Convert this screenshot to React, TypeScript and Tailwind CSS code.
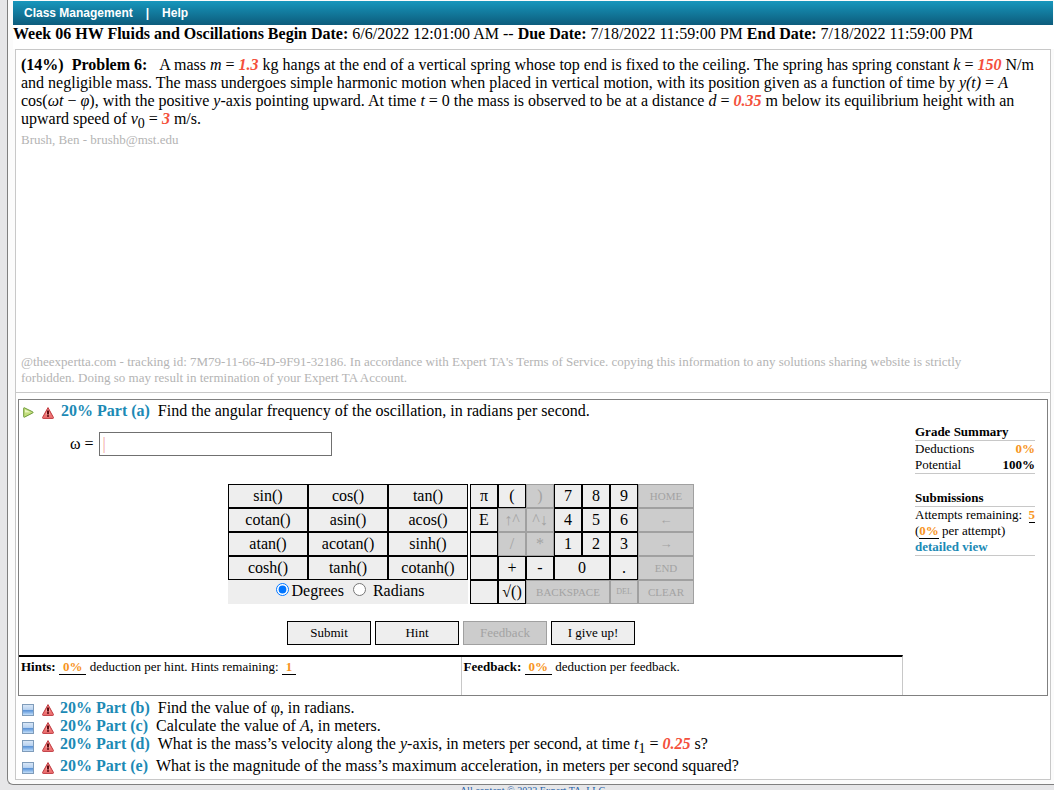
import { useRef, useState, type ReactNode } from "react";

function Warning() {
  return (
    <svg width="12" height="12" viewBox="0 0 12 12" className="shrink-0" aria-hidden="true">
      <path d="M6 .6 11.5 10.6Q11.6 11.4 10.9 11.4H1.1Q.4 11.4.5 10.6Z" fill="#ee7474" stroke="#bf3a40" strokeWidth="1" />
      <path d="M6 2.6 8.4 7.4H3.6Z" fill="#f8b4ac" />
      <path d="M5 3.5h2v4H5zM5 8.3h2v1.5H5z" fill="#5a0a10" />
    </svg>
  );
}

function Play() {
  return (
    <svg width="11" height="11" viewBox="0 0 11 11" className="shrink-0" aria-hidden="true">
      <path d="M.7 1.2Q.7.5 1.4.8L9.8 4.9Q10.4 5.4 9.8 5.9L1.4 10.2Q.7 10.4.7 9.7Z" fill="#c3de7c" stroke="#6f9b3c" />
      <path d="M2 2.4 7.6 5.2 2 5.6Z" fill="#e9f5bf" />
    </svg>
  );
}

function Square() {
  return (
    <svg width="12" height="12" viewBox="0 0 12 12" className="shrink-0" aria-hidden="true">
      <defs>
        <linearGradient id="sq" x1="0" y1="0" x2="0" y2="1">
          <stop offset="0" stopColor="#dbe8f7" />
          <stop offset=".45" stopColor="#b9d3f0" />
          <stop offset=".55" stopColor="#5b93d6" />
          <stop offset=".75" stopColor="#8db9ea" />
          <stop offset="1" stopColor="#d3e8fb" />
        </linearGradient>
      </defs>
      <rect x=".5" y=".5" width="11" height="11" fill="url(#sq)" stroke="#7f9cba" />
    </svg>
  );
}

const V = ({ children }: { children: ReactNode }) => (
  <b className="italic text-[#f4503c]">{children}</b>
);
const Amber = ({ children }: { children: ReactNode }) => (
  <b className="text-[#f7941d]">{children}</b>
);
const Blank = ({ children }: { children: ReactNode }) => (
  <b className="inline-block border-b border-black px-1 leading-[15px] text-[#f7941d]">{children}</b>
);
const Sub = ({ children }: { children: ReactNode }) => (
  <sub className="text-sm leading-none">{children}</sub>
);

function Part({ id, pct = "20%", className = "", children }: { id: string; pct?: string; className?: string; children: ReactNode }) {
  return (
    <div className={`flex items-center ${className}`}>
      <div className="flex w-[38px] shrink-0 items-center gap-2 pt-[3px]">
        {id === "a" ? <Play /> : <Square />}
        <Warning />
      </div>
      <p>
        <b className="mr-2 text-[#1c8ab5]">{pct} Part ({id})</b>
        {children}
      </p>
    </div>
  );
}

const FUNCS = ["sin()", "cos()", "tan()", "cotan()", "asin()", "acos()", "atan()", "acotan()", "sinh()", "cosh()", "tanh()", "cotanh()"];

type Key = { t: string; off?: boolean; span?: boolean; size?: string; name?: string };
const KEYS: Key[] = [
  { t: "π" }, { t: "(" }, { t: ")", off: true }, { t: "7" }, { t: "8" }, { t: "9" }, { t: "HOME", off: true, size: "text-[11px]" },
  { t: "E" }, { t: "↑^", off: true }, { t: "^↓", off: true }, { t: "4" }, { t: "5" }, { t: "6" }, { t: "←", off: true, size: "text-[13px]" },
  { t: "", name: "blank 1" }, { t: "/", off: true }, { t: "*", off: true }, { t: "1" }, { t: "2" }, { t: "3" }, { t: "→", off: true, size: "text-[13px]" },
  { t: "", name: "blank 2" }, { t: "+" }, { t: "-" }, { t: "0", span: true }, { t: "." }, { t: "END", off: true, size: "text-[11px]" },
  { t: "", name: "blank 3" }, { t: "√()" },
];

const ON = "border-black bg-[#eeeeee] text-black";
const OFF = "border-[#a0a0a0] bg-[#cccccc] text-[#a3a3a3]";

export default function App() {
  const [answer, setAnswer] = useState("");
  const [unit, setUnit] = useState("deg");
  const field = useRef<HTMLInputElement>(null);
  const type = (t: string) => {
    setAnswer((a) => a + t);
    field.current?.focus();
  };

  return (
    <div className="bg-[#e6e6e8] pl-[7px] font-['Liberation_Serif',serif] text-base leading-[18px] text-black">
      <div className="rounded-bl-md border-b border-l border-[#808080] bg-[#fbfbfb] pt-px pb-1 pl-[5px]">
        <nav className="mr-px flex h-6 items-center gap-[13px] bg-linear-to-b from-[#1797bd] to-[#0d5c7c] pl-[11px] font-['Liberation_Sans',sans-serif] text-[12px] font-bold text-white">
          <a href="#class">Class Management</a>
          <span>|</span>
          <a href="#help">Help</a>
        </nav>
        <h1 className="h-6 bg-white">
          <b>Week 06 HW Fluids and Oscillations Begin Date:</b> 6/6/2022 12:01:00 AM -- <b>Due Date:</b> 7/18/2022 11:59:00 PM{" "}
          <b>End Date:</b> 7/18/2022 11:59:00 PM
        </h1>

        <main className="mr-[3px] ml-[2px] border border-[#c8c8c8] bg-white">
          <section className="flex h-[343px] flex-col justify-between border-b border-[#c8c8c8] px-[5px] pt-[6px] pb-[6px]">
            <div>
              <p>
                <b className="mr-3">(14%)&nbsp; Problem 6:</b>A mass <i>m</i> = <V>1.3</V> kg hangs at the end of a vertical spring whose top end is fixed to the
                ceiling. The spring has spring constant <i>k</i> = <V>150</V> N/m and negligible mass. The mass undergoes simple harmonic motion when placed in
                vertical motion, with its position given as a function of time by <i>y(t)</i> = <i>A</i> cos(<i>ωt</i> − <i>φ</i>), with the positive{" "}
                <i>y</i>-axis pointing upward. At time <i>t</i> = 0 the mass is observed to be at a distance <i>d</i> = <V>0.35</V> m below its equilibrium height
                with an upward speed of <i>v</i><Sub>0</Sub> = <V>3</V> m/s.
              </p>
              <p className="mt-1 text-[13px] leading-4 text-[#b4b4b4]">Brush, Ben - brushb@mst.edu</p>
            </div>
            <p className="pr-8 text-[13px] leading-4 text-[#b4b4b4]">
              @theexpertta.com - tracking id: 7M79-11-66-4D-9F91-32186. In accordance with Expert TA's Terms of Service. copying this information to any solutions
              sharing website is strictly forbidden. Doing so may result in termination of your Expert TA Account.
            </p>
          </section>

          <div className="px-[2px] pt-[6px] pb-1">
            <section className="border border-[#808080]">
              <div className="flex">
                <div className="min-w-0 flex-1">
                  <Part id="a" className="pt-[2px] pl-1">Find the angular frequency of the oscillation, in radians per second.</Part>
                  <div className="mt-3 flex items-center pl-[51px]">
                    <label htmlFor="ans">ω =</label>
                    <input id="ans" ref={field} value={answer} onChange={(e) => setAnswer(e.target.value)} placeholder="|"
                      className="ml-[5px] h-6 w-[233px] border border-[#707070] bg-white px-[3px] text-base outline-none placeholder:text-[#f2a097]" />
                  </div>

                  <div className="mt-7 ml-[209px] flex gap-[2px]">
                    <div className="w-[240px]">
                      <div className="grid grid-cols-3">
                        {FUNCS.map((f) => (
                          <button key={f} type="button" onClick={() => type(f)} className={`h-6 border ${ON}`}>{f}</button>
                        ))}
                      </div>
                      <fieldset className="flex h-6 items-start justify-center bg-[#eeeeee] pt-[2px] pl-1">
                        <label className="flex items-center">
                          <input type="radio" name="unit" checked={unit === "deg"} onChange={() => setUnit("deg")} className="mr-[3px] mb-1 size-[13px]" />
                          Degrees
                        </label>
                        <label className="ml-[9px] flex items-center">
                          <input type="radio" name="unit" checked={unit === "rad"} onChange={() => setUnit("rad")} className="mr-[7px] mb-1 size-[13px]" />
                          Radians
                        </label>
                      </fieldset>
                    </div>
                    <div className="grid grid-cols-[repeat(6,28px)_56px]">
                      {KEYS.map((k) => (
                        <button key={k.name ?? k.t} type="button" aria-label={k.t || k.name} disabled={k.off} onClick={() => type(k.t)}
                          className={`h-6 overflow-hidden border leading-[18px] ${k.size ?? ""} ${k.off ? OFF : ON} ${k.span ? "col-span-2" : ""}`}>
                          {k.t}
                        </button>
                      ))}
                      <button type="button" disabled className={`col-span-3 h-6 border text-[11px] ${OFF}`}>BACKSPACE</button>
                      <button type="button" disabled className={`h-6 border text-[8px] ${OFF}`}>DEL</button>
                      <button type="button" disabled className={`h-6 border text-[11px] ${OFF}`}>CLEAR</button>
                    </div>
                  </div>

                  <div className="mt-[17px] ml-[268px] flex gap-1 text-[13px]">
                    <button type="button" className={`h-6 w-[84px] border ${ON}`}>Submit</button>
                    <button type="button" className={`h-6 w-[84px] border ${ON}`}>Hint</button>
                    <button type="button" disabled className={`h-6 w-[84px] border ${OFF}`}>Feedback</button>
                    <button type="button" className={`h-6 w-[84px] border ${ON}`}>I give up!</button>
                  </div>
                </div>

                <aside className="mt-6 mr-3 w-[120px] shrink-0 text-[13px] leading-4">
                  <h2 className="border-b border-[#c8c8c8] font-bold">Grade Summary</h2>
                  <dl className="grid grid-cols-2 border-b border-[#c8c8c8]">
                    <dt>Deductions</dt>
                    <dd className="text-right"><Amber>0%</Amber></dd>
                    <dt>Potential</dt>
                    <dd className="text-right font-bold">100%</dd>
                  </dl>
                  <h2 className="mt-4 border-b border-[#c8c8c8] font-bold">Submissions</h2>
                  <div className="border-b border-[#c8c8c8]">
                    <p className="flex justify-between whitespace-nowrap">Attempts remaining: <b className="border-b border-black leading-[15px] text-[#f7941d]">5</b></p>
                    <p>(<b className="inline-block border-b border-black leading-[15px] text-[#f7941d]">0%</b> per attempt)</p>
                    <a href="#detail" className="block font-bold text-[#1c8ab5]">detailed view</a>
                  </div>
                </aside>
              </div>

              <div className="mt-[10px] mr-36 grid h-10 grid-cols-2 border-t-2 border-r border-t-black border-r-[#c8c8c8] text-[13px] leading-4">
                <p className="pt-[2px] pl-[2px]"><b>Hints:</b> <Blank>0%</Blank> deduction per hint. Hints remaining: <Blank>1</Blank></p>
                <p className="border-l border-[#c8c8c8] pt-[2px] pl-[2px]"><b>Feedback:</b> <Blank>0%</Blank> deduction per feedback.</p>
              </div>
            </section>

            <div className="pt-[3px] pl-1">
              <Part id="b">Find the value of φ, in radians.</Part>
              <Part id="c">Calculate the value of <i>A</i>, in meters.</Part>
              <Part id="d">What is the mass’s velocity along the <i>y</i>-axis, in meters per second, at time <i>t</i><Sub>1</Sub> = <V>0.25</V> s?</Part>
              <Part id="e" className="mt-1">What is the magnitude of the mass’s maximum acceleration, in meters per second squared?</Part>
            </div>
          </div>
        </main>
      </div>
      <footer className="pl-1 text-center text-[10px] leading-3 text-[#1f5fa8]">
        All content © 2022 Expert TA, LLC
      </footer>
    </div>
  );
}
